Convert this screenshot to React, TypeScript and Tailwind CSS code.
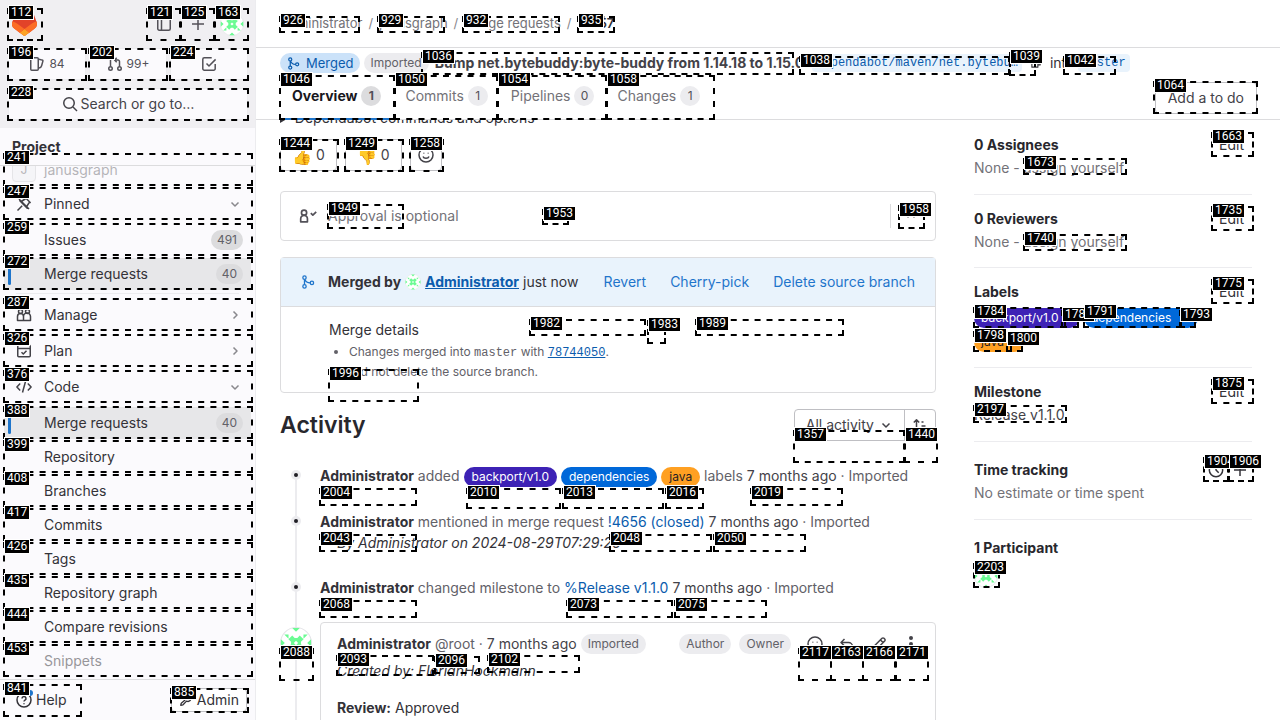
import type { ReactNode } from "react";

const icons: Record<string, ReactNode> = {
  sidebar: (<><rect x="1.75" y="1.75" width="12.5" height="12.5" rx="1.5" /><path d="M5.5 2v12" /></>),
  plus: <path d="M8 2v12M2 8h12" />,
  issues: (<><path d="M9.25 5v8.25a1 1 0 0 1-1 1h-5.5a1 1 0 0 1-1-1V2.75a1 1 0 0 1 1-1h5.5a1 1 0 0 1 1 1V5Z" /><path d="m10 3.2 3.3.9a.8.8 0 0 1 .6 1l-1.3 4.6a3 3 0 0 1-2.6 2.2" /></>),
  mr: (<><circle cx="3.5" cy="12.5" r="1.75" /><circle cx="12.5" cy="12.5" r="1.75" /><path d="M3.5 10.5V2M1.5 3.5 3.5 1.6M8 4h3a1.5 1.5 0 0 1 1.5 1.5v5M9.7 1.8 7.6 4l2.1 2.2" /></>),
  todo: (<><path d="M14.2 8v4.7a1.5 1.5 0 0 1-1.5 1.5H3.3a1.5 1.5 0 0 1-1.5-1.5V3.3a1.5 1.5 0 0 1 1.5-1.5h7.4" /><path d="m5.5 7.5 2.5 2.5 6.6-6.6" /></>),
  search: (<><circle cx="7" cy="7" r="5.25" /><path d="m11 11 4 4" /></>),
  pin: <path d="M9.5 1.8 14.2 6.5l-1.2.3-2 3.2.2 2.2-7.400-7.400 2.200.2 3.200-2ZM6.200 9.800 1.500 14.500M3 3l10 10" />,
  down: <path d="m4.500 6.500 3.500 3.500 3.500-3.500" />,
  up: <path d="m4.500 9.500 3.500-3.500 3.500 3.500" />,
  right: <path d="m6.500 4.500 3.500 3.500-3.500 3.500" />,
  users: (<><circle cx="4.500" cy="4.500" r="2" /><circle cx="11.500" cy="4.500" r="2" /><path d="M1.500 13.500V9.500a3 3 0 0 1 6 0v4ZM7.500 9.500a3.500 3.500 0 0 1 7 0v4h-7" /></>),
  plan: (<><rect x="1.750" y="2.250" width="12.500" height="11.500" rx="1" /><path d="M2 5.500h12M5.500 9.300l1.800 1.700 3.200-3.200" /></>),
  code: <path d="M4.200 4.500.9 8l3.300 3.500M11.800 4.500 15.100 8l-3.300 3.500M9.500 2.500l-3 11" />,
  help: (<><circle cx="8" cy="8" r="7" /><path d="M6 6.500a2 2 0 1 1 3 1.700c-.7.4-1 .7-1 1.400M8 11.200v1.100" /></>),
  wrench: <path d="m2 14 .6-2.400 4.300-3.600a3.600 3.600 0 0 1 4.600-5.200L9.600 5l1.400 1.400 2.500-1.800a3.600 3.600 0 0 1-4.900 4.700l-4 4.200L2 14Z" />,
  merge: (<><circle cx="4" cy="3" r="1.900" /><circle cx="4" cy="13" r="1.900" /><circle cx="12.500" cy="9" r="1.900" /><path d="M4 5v6M4.500 5c.8 2.600 3 4 6 4" /></>),
  smile: (<><circle cx="8" cy="8" r="7" /><path d="M5 9.500c.8 2.300 5.200 2.300 6 0M5.800 5.800v.8M10.200 5.800v.8" /></>),
  approve: (<><circle cx="4.500" cy="5" r="2.300" /><path d="M1.500 13.200V10.500a3 3 0 0 1 6 0v2.700ZM10.500 5.500l1.800 1.800 3-3" /></>),
  sort: <path d="M4.500 13.500V3M1.800 5.500l2.700-2.800 2.700 2.800M9.500 5h2M9.500 9h4M9.500 13h5" />,
  reply: <path d="M5.500 3 2 6.500 5.500 10M2 6.500h7.500a4 4 0 0 1 4 4V13" />,
  pencil: <path d="m2 14 .8-3.500 8.200-8.200a1.400 1.400 0 0 1 2 0l.7.7a1.400 1.400 0 0 1 0 2L5.500 13.200 2 14ZM9.500 4l2.500 2.500" />,
  dots: (<g fill="currentColor" stroke="none"><circle cx="8" cy="2" r="2" /><circle cx="8" cy="8" r="2" /><circle cx="8" cy="14" r="2" /></g>),
  clock: (<><circle cx="8" cy="8" r="6.700" /><path d="M8 4v4l2.700 2.700" /></>),
  copy: <path d="M5.500 5.500v-3h8v8h-3M2.500 5.500h8v8h-8Z" />,
};

function Icon({ name, className = "size-4" }: { name: string; className?: string }) {
  return (
    <svg viewBox="0 0 16 16" fill="none" stroke="currentColor" strokeWidth="1.5" strokeLinejoin="round" aria-hidden="true" className={`shrink-0 ${className}`}>
      {icons[name]}
    </svg>
  );
}

function Avatar({ className }: { className: string }) {
  return (
    <svg viewBox="0 0 24 24" role="img" aria-label="Administrator" className={`shrink-0 ${className}`}>
      <circle cx="12" cy="12" r="11.6" fill="#fff" stroke="#e4e4e8" strokeWidth="0.8" />
      <g fill="#6bfb93">
        <path d="M9.2 6.3 11 8.300h2l1.800-2 2.900 2.900-2 1.800v2l2 1.800-2.900 2.900-1.800-2h-2l-1.800 2-2.900-2.900 2-1.800v-2l-2-1.800ZM12 10.400 10.400 12l1.600 1.600 1.600-1.600Z" fillRule="evenodd" />
        <path d="M9.200.7h5.600L12 3.600ZM9.200 23.300h5.600L12 20.400ZM.7 9.200v5.600L3.600 12ZM23.300 9.200v5.600L20.400 12ZM3.200 5.600h3.200v3.200ZM20.800 5.600h-3.200v3.200ZM3.200 18.400h3.200v-3.200ZM20.800 18.400h-3.200v-3.200Z" />
      </g>
    </svg>
  );
}

function Tanuki() {
  return (
    <svg viewBox="0 0 25 24" className="h-6 w-[25px]" role="img" aria-label="GitLab">
      <path fill="#e24329" d="m24.507 9.500-.034-.09L21.082.562a.896.896 0 0 0-1.694.091l-2.290 7.010H7.825L5.535.653a.898.898 0 0 0-1.694-.09L.451 9.411.416 9.500a6.297 6.297 0 0 0 2.090 7.278l.012.010.030.022 5.160 3.867 2.560 1.935 1.554 1.176a1.051 1.051 0 0 0 1.268 0l1.555-1.176 2.560-1.935 5.197-3.890.014-.010A6.297 6.297 0 0 0 24.507 9.500Z" />
      <path fill="#fc6d26" d="m24.507 9.500-.034-.090a11.440 11.440 0 0 0-4.560 2.051l-7.447 5.632 4.742 3.584 5.197-3.890.014-.010A6.297 6.297 0 0 0 24.507 9.500Z" />
      <path fill="#fca326" d="m7.707 20.677 2.560 1.935 1.555 1.176a1.051 1.051 0 0 0 1.268 0l1.555-1.176 2.560-1.935-4.743-3.584-4.755 3.584Z" />
      <path fill="#fc6d26" d="M5.010 11.461a11.430 11.430 0 0 0-4.560-2.050L.416 9.500a6.297 6.297 0 0 0 2.090 7.278l.012.010.030.022 5.160 3.867 4.745-3.584-7.444-5.632Z" />
    </svg>
  );
}

function NavItem({ label, icon, count, chevron, active, className = "" }: { label: string; icon?: string; count?: string; chevron?: string; active?: boolean; className?: string }) {
  return (
    <a href="#" className={`flex h-8 shrink-0 items-center rounded pr-2 pl-1 ${active ? "bg-[#e7e7e9]" : ""} ${className}`}>
      <span className={`h-[22px] w-[3px] rounded-full ${active ? "bg-[#1f75cb]" : ""}`} />
      <span className="flex w-[33px] items-center pl-[5px] text-[#434248]">{icon && <Icon name={icon} />}</span>
      <span className="flex-1">{label}</span>
      {count && <span className="flex h-5 items-center rounded-full bg-[#dcdcde] px-1.5 text-xs text-[#626168]">{count}</span>}
      {chevron && <Icon name={chevron} className="size-4 text-[#89888d]" />}
    </a>
  );
}

function Sidebar() {
  const shortcut = "flex h-8 flex-1 items-center justify-center gap-1 rounded border border-[#ececef] bg-[#fbfafd] text-xs";
  return (
    <nav aria-label="Primary" className="flex w-64 shrink-0 flex-col border-r border-[#ececef] bg-[#fbfafd] text-[#333238]">
      <div className="flex flex-col gap-2 bg-[#f0eff2] p-2 pr-[7px] text-[#535158]">
        <div className="flex h-8 items-center gap-0.5">
          <a href="#" className="mr-auto px-1"><Tanuki /></a>
          <button aria-label="Hide sidebar" className="grid size-8 place-items-center"><Icon name="sidebar" /></button>
          <button aria-label="Create new" className="grid size-8 place-items-center"><Icon name="plus" /></button>
          <button aria-label="User menu" className="grid size-8 place-items-center"><Avatar className="size-6" /></button>
        </div>
        <div className="flex gap-[3px]">
          <a href="#" className={shortcut}><Icon name="issues" />84</a>
          <a href="#" className={shortcut}><Icon name="mr" />99+</a>
          <a href="#" aria-label="To-do list" className={shortcut}><Icon name="todo" /></a>
        </div>
        <button className="flex h-8 items-center justify-center gap-[3px] rounded border border-[#ececef] bg-[#fbfafd] text-[#434248]">
          <Icon name="search" />Search or go to…
        </button>
      </div>
      <div className="h-[38px] shrink-0 border-b border-[#dcdcde] px-3 pt-[9px] font-bold">Project</div>
      <div className="flex min-h-0 flex-1 flex-col overflow-hidden px-1">
        <a href="#" className="-mt-3 flex h-8 shrink-0 items-center gap-2 px-2 opacity-35">
          <span className="grid size-6 place-items-center rounded border border-[#bfbfc3] bg-[#ececef] text-xs">J</span>janusgraph
        </a>
        <NavItem icon="pin" label="Pinned" chevron="down" className="mt-0.5" />
        <NavItem label="Issues" count="491" className="mt-1" />
        <NavItem label="Merge requests" count="40" active className="mt-0.5" />
        <hr className="mx-3 mt-[3px] mb-[5px] border-[#ececef]" />
        <NavItem icon="users" label="Manage" chevron="right" />
        <NavItem icon="plan" label="Plan" chevron="right" className="mt-1" />
        <NavItem icon="code" label="Code" chevron="down" className="mt-1 mb-1" />
        <div className="flex flex-col gap-0.5">
          <NavItem label="Merge requests" count="40" active />
          <NavItem label="Repository" />
          <NavItem label="Branches" />
          <NavItem label="Commits" />
          <NavItem label="Tags" />
          <NavItem label="Repository graph" />
          <NavItem label="Compare revisions" />
          <NavItem label="Snippets" className="opacity-50" />
        </div>
      </div>
      <div className="flex h-[41px] shrink-0 items-center justify-between border-t border-[#dcdcde] px-2">
        <button className="relative flex h-8 items-center gap-1 pl-2"><Icon name="help" />Help
          <span className="absolute top-1.5 left-[19px] size-1.5 rounded-full bg-[#1f75cb]" />
        </button>
        <a href="#" className="flex h-6 items-center gap-1 rounded border border-[#bfbfc3] bg-white px-[7px]"><Icon name="wrench" className="size-3.5" />Admin</a>
      </div>
    </nav>
  );
}

function Tab({ label, count, active }: { label: string; count: string; active?: boolean }) {
  return (
    <a href="#" className={`flex h-11 items-center gap-1 border-b-2 pb-0.5 ${active ? "border-[#1f75cb] px-3 font-bold text-[#18171d]" : "border-transparent px-[11px] text-[#737278]"}`}>
      {label}
      <span className={`grid size-5 place-items-center rounded-full text-xs text-[#535158] ${active ? "bg-[#dcdcde]" : "bg-[#ececef] font-normal"}`}>{count}</span>
    </a>
  );
}

function Label({ children, className }: { children: ReactNode; className: string }) {
  return <a href="#" className={`inline-flex h-5 items-center rounded-full text-xs ${className}`}>{children}</a>;
}
const purple = "bg-[#3d22b5] text-white";
const blue = "bg-[#0068d9] text-white";
const orange = "bg-[#ffa022] text-[#1f1e24]";
const grayPill = "inline-flex h-5 items-center rounded-full bg-[#ececef] px-[7px] text-xs text-[#626168]";

function Crumbs() {
  const sep = <span className="px-1.5 text-[#89888d]">/</span>;
  return (
    <nav aria-label="Breadcrumb" className="flex h-12 shrink-0 items-center border-b border-[#dcdcde] px-6 text-[13px] text-[#737278]">
      <a href="#">Administrator</a>{sep}<a href="#">janusgraph</a>{sep}<a href="#">Merge requests</a>{sep}
      <a href="#" className="font-semibold text-[#333238]">!4657</a>
    </nav>
  );
}

function StickyHeader() {
  const code = "rounded bg-[#e9f3fc] px-1 font-['Liberation_Mono',monospace] text-xs leading-[18px] text-[#0b5cad]";
  return (
    <header className="h-[72px] shrink-0 border-b border-[#dcdcde] pl-6">
      <div className="flex h-7 items-center pt-0.5 whitespace-nowrap">
        <span className="mr-1 flex h-5 items-center gap-1.5 rounded-full bg-[#cbe2f9] pr-1.5 pl-[7px] text-[13px] text-[#0b5cad]"><Icon name="merge" className="size-[13px]" />Merged</span>
        <span className={`${grayPill} mr-1.5`}>Imported</span>
        <a href="#" className="mr-2 font-bold text-[#434248]">Bump net.bytebuddy:byte-buddy from 1.14.18 to 1.15.0</a>
        <a href="#" className={code}>dependabot/maven/net.bytebu…</a>
        <button aria-label="Copy branch name" className="mx-2"><Icon name="copy" className="size-3" /></button>
        into <a href="#" className={`${code} ml-1`}>master</a>
      </div>
      <div className="flex h-11 items-center justify-between pr-[23px]">
        <div className="flex gap-px">
          <Tab label="Overview" count="1" active />
          <Tab label="Commits" count="1" />
          <Tab label="Pipelines" count="0" />
          <Tab label="Changes" count="1" />
        </div>
        <button className="h-8 rounded border border-[#bfbfc3] px-3 text-[#434248]">Add a to do</button>
      </div>
    </header>
  );
}

function Note({ children, className }: { children: ReactNode; className: string }) {
  return (
    <li className={`flex ${className}`}>
      <span className="z-10 mt-1 ml-[11px] grid size-[10px] shrink-0 place-items-center rounded-full bg-[#ececef]"><span className="size-1 rounded-full bg-[#1f1e24]" /></span>
      <div className="ml-[19px] min-w-0 leading-5 text-[#626168]">{children}</div>
    </li>
  );
}

const admin = <a href="#" className="font-bold text-[#333238]">Administrator</a>;
const ago = <a href="#" className="text-[#434248]">7 months ago</a>;

function Overview() {
  const award = "flex h-8 items-center gap-1 rounded border border-[#bfbfc3] px-[11px] text-[#434248]";
  return (
    <main className="min-w-0 flex-1">
      <details className="-mt-3 h-5 text-[#333238]"><summary>Dependabot commands and options</summary></details>
      <div className="mt-[11px] flex gap-2">
        <button className={award}><span className="w-5 pt-0.5 text-base">👍</span>0</button>
        <button className={award}><span className="w-5 pt-0.5 text-base">👎</span>0</button>
        <button aria-label="Add reaction" className="grid size-8 place-items-center rounded border border-[#bfbfc3] text-[#434248]"><Icon name="smile" /></button>
      </div>
      <section className="mt-5 flex h-[50px] items-center rounded border border-[#dcdcde] pr-2.5 pl-[18px] text-[#737278]">
        <Icon name="approve" className="size-[18px] text-[#535158]" />
        <span className="ml-[11px] flex-1">Approval is optional</span>
        <button aria-label="Expand" className="flex h-6 items-center border-l border-[#dcdcde] pr-1.5 pl-3"><Icon name="up" /></button>
      </section>
      <section className="mt-4 rounded border border-[#dcdcde]">
        <div className="flex h-[49px] items-center border-b border-[#dcdcde] bg-[#e9f3fc] pr-5 pl-5 whitespace-nowrap text-[#1f75cb]">
          <Icon name="merge" className="size-[14px]" />
          <span className="ml-[13px] flex flex-1 items-center gap-1 text-[#333238]"><b className="font-bold">Merged by</b><Avatar className="size-4" />
            <a href="#" className="font-bold text-[#0b5cad] underline">Administrator</a>just now</span>
          <button className="mr-6">Revert</button><button className="mr-6">Cherry-pick</button><button>Delete source branch</button>
        </div>
        <div className="h-[85px] pt-[11px] pl-12">
          <h3 className="leading-6 text-[#333238]">Merge details</h3>
          <ul className="list-disc pl-5 text-xs leading-5 text-[#626168]">
            <li>Changes merged into <code className="font-['Liberation_Mono',monospace] leading-4">master</code> with <a href="#" className="font-['Liberation_Mono',monospace] leading-4 text-[#0b5cad] underline">78744050</a>.</li>
            <li>Did not delete the source branch.</li>
          </ul>
        </div>
      </section>
      <div className="mt-4 flex h-8 items-center justify-between">
        <h2 className="text-[23px] font-semibold text-[#28272d]">Activity</h2>
        <div className="flex h-8 rounded border border-[#bfbfc3] text-[#434248]">
          <button className="flex items-center gap-1 pr-2.5 pl-[11px]">All activity<Icon name="down" /></button>
          <button aria-label="Sort direction" className="grid w-[31px] place-items-center border-l border-[#bfbfc3]"><Icon name="sort" /></button>
        </div>
      </div>
      <div className="relative mt-[25px]">
        <span className="absolute inset-y-2.5 left-[15px] w-0.5 bg-[#ececef]" />
        <ul>
          <Note className="h-[46px]">{admin} added <Label className={`${purple} px-2`}>backport/v1.0</Label> <Label className={`${blue} px-2`}>dependencies</Label> <Label className={`${orange} px-2`}>java</Label> labels {ago} · Imported</Note>
          <Note className="h-[66px]">{admin} mentioned in merge request <a href="#" className="text-[#0b5cad]">!4656 (closed)</a> {ago} · Imported
            <p className="mt-px pl-[17px] text-[#333238] italic">By Administrator on 2024-08-29T07:29:26</p></Note>
          <Note className="h-11">{admin} changed milestone to <a href="#" className="text-[#0b5cad]">%Release v1.1.0</a> {ago} · Imported</Note>
        </ul>
        <article className="relative flex gap-2">
          <Avatar className="mt-[5px] size-8" />
          <div className="h-36 flex-1 rounded border border-[#dcdcde] bg-white pt-[11px] pr-2 pl-4 text-[#333238]">
            <div className="flex h-5 items-center whitespace-nowrap text-[#626168]">
              {admin}<span className="mr-1 ml-1">@root ·</span>{ago}<span className={`${grayPill} mr-auto ml-1`}>Imported</span>
              <span className={grayPill}>Author</span><span className={`${grayPill} mr-2 ml-2`}>Owner</span>
              {["smile", "reply", "pencil", "dots"].map((n) => (
                <button key={n} aria-label={n} className="grid w-8 place-items-center text-[#434248]"><Icon name={n} /></button>
              ))}
            </div>
            <p className="mt-[7px] leading-5 italic">Created by: FlorianHockmann</p>
            <p className="mt-[17px] leading-5"><b className="font-bold">Review:</b> Approved</p>
          </div>
        </article>
      </div>
    </main>
  );
}

function Side({ title, action, children, className }: { title: string; action?: ReactNode; children: ReactNode; className: string }) {
  return (
    <section className={`border-[#ececef] ${className}`}>
      <div className="flex h-6 items-center"><h3 className="flex-1 font-bold text-[#28272d]">{title}</h3>{action}</div>
      {children}
    </section>
  );
}

function Details() {
  const edit = <button className="px-2 text-[#333238]">Edit</button>;
  const none = <p className="mt-px leading-5 text-[#737278]">None - <button>assign yourself</button></p>;
  return (
    <aside className="w-[278px] shrink-0">
      <Side title="0 Assignees" action={edit} className="border-b pt-[13px] pb-4">{none}</Side>
      <Side title="0 Reviewers" action={edit} className="border-b pt-3 pb-[15px]">{none}</Side>
      <Side title="Labels" action={edit} className="border-b pt-3 pb-[15px]">
        <div className="mt-1 flex max-w-[260px] flex-wrap gap-1">
          <Label className={`${purple} w-[106px] pl-[7px]`}>backport/v1.0</Label>
          <Label className={`${blue} w-[114px] pl-[7px]`}>dependencies</Label>
          <Label className={`${orange} w-[50px] pl-[7px]`}>java</Label>
        </div>
      </Side>
      <Side title="Milestone" action={edit} className="border-b pt-3 pb-4"><a href="#" className="mt-px block leading-5 text-[#434248]">Release v1.1.0</a></Side>
      <Side title="Time tracking" className="border-b pt-4 pb-4" action={
        <div className="flex text-[#333238]">
          <button aria-label="Time report" className="grid size-6 place-items-center"><Icon name="clock" /></button>
          <button aria-label="Add time entry" className="grid size-6 place-items-center"><Icon name="plus" /></button>
        </div>}>
        <p className="mt-px leading-5 text-[#737278]">No estimate or time spent</p>
      </Side>
      <Side title="1 Participant" className="pt-4"><a href="#" className="mt-1 block"><Avatar className="size-6" /></a></Side>
    </aside>
  );
}

/* id, left, top, width, height */
const marks: [number, number, number, number, number][] = [
  [112, 7, 8, 36, 33], [121, 146, 8, 35, 33], [125, 180, 8, 35, 33], [163, 214, 8, 35, 33],
  [196, 7, 48, 80, 33], [202, 88, 48, 80, 33], [224, 169, 48, 80, 33], [228, 7, 88, 242, 33],
  [241, 3, 153, 250, 33], [247, 3, 187, 250, 33], [259, 3, 223, 250, 33], [272, 3, 257, 250, 33],
  [287, 3, 298, 250, 33], [326, 3, 334, 250, 33], [376, 3, 370, 250, 33], [388, 3, 406, 250, 33],
  [399, 3, 440, 250, 33], [408, 3, 474, 250, 33], [417, 3, 508, 250, 33], [426, 3, 542, 250, 33],
  [435, 3, 576, 250, 33], [444, 3, 610, 250, 33], [453, 3, 644, 250, 33], [841, 3, 684, 79, 33],
  [885, 170, 688, 79, 25], [926, 279, 16, 81, 17], [929, 377, 16, 68, 17], [932, 462, 16, 98, 17],
  [935, 577, 16, 38, 17], [1036, 421, 52, 373, 23], [1038, 799, 56, 211, 19], [1039, 1009, 52, 27, 24],
  [1042, 1063, 56, 53, 19], [1046, 279, 75, 116, 45], [1050, 394, 75, 104, 45], [1054, 497, 75, 110, 45],
  [1058, 606, 75, 109, 45], [1064, 1153, 81, 105, 33], [1244, 279, 139, 60, 33], [1249, 344, 139, 60, 33],
  [1258, 409, 139, 35, 33], [1357, 793, 430, 112, 33], [1440, 904, 430, 34, 33], [1663, 1211, 132, 43, 25],
  [1673, 1023, 158, 104, 17], [1735, 1211, 206, 43, 25], [1740, 1023, 234, 104, 17], [1775, 1211, 279, 43, 25],
  [1784, 973, 307, 93, 21], [1786, 1061, 310, 18, 18], [1791, 1083, 307, 99, 21], [1793, 1179, 310, 17, 18],
  [1798, 973, 331, 39, 21], [1800, 1006, 334, 17, 18], [1875, 1211, 379, 43, 25], [1904, 1203, 457, 26, 25],
  [1906, 1228, 457, 26, 25], [1949, 327, 204, 77, 25], [1953, 542, 209, 27, 16], [1958, 898, 205, 27, 24],
  [1982, 529, 319, 117, 17], [1983, 647, 320, 19, 24], [1989, 695, 319, 149, 17], [1996, 328, 369, 91, 33],
  [2004, 319, 488, 98, 18], [2010, 466, 488, 95, 21], [2013, 562, 488, 102, 21], [2016, 665, 488, 39, 21],
  [2019, 750, 488, 93, 18], [2043, 319, 534, 98, 18], [2048, 609, 534, 103, 18], [2050, 713, 534, 93, 18],
  [2068, 319, 600, 98, 18], [2073, 566, 600, 107, 18], [2075, 674, 600, 93, 18], [2088, 279, 648, 35, 33],
  [2093, 336, 655, 98, 21], [2096, 434, 656, 46, 18], [2102, 487, 655, 93, 18], [2117, 798, 648, 34, 33],
  [2163, 830, 648, 34, 33], [2166, 862, 648, 34, 33], [2171, 895, 648, 34, 33], [2197, 973, 405, 94, 18],
  [2203, 973, 563, 27, 25],
];

/* Every side begins and ends on a full dash. */
function dashes(length: number) {
  const n = Math.max(2, Math.round((length + 6) / 12));
  return `6 ${(length - n * 6) / (n - 1)}`;
}

function Marks() {
  return (
    <div className="pointer-events-none absolute inset-0 z-20 overflow-hidden">
      <svg className="size-full" stroke="#000" strokeWidth="2" aria-hidden="true">
        {marks.map(([id, x, y, w, h]) => (
          <g key={id}>
            <path d={`M${x} ${y + 1}h${w}M${x} ${y + h - 1}h${w}`} strokeDasharray={dashes(w)} />
            <path d={`M${x + 1} ${y}v${h}M${x + w - 1} ${y}v${h}`} strokeDasharray={dashes(h)} />
          </g>
        ))}
      </svg>
      {marks.map(([id, left, top]) => (
        <span key={id} className="absolute border border-white bg-black px-0.5 font-['Roboto',sans-serif] text-xs leading-[13px] text-white" style={{ left: left + 1, top: top - 3 }}>{id}</span>
      ))}
    </div>
  );
}

export default function App() {
  return (
    <div className="relative flex h-screen overflow-hidden bg-white font-['Inter',sans-serif] text-sm text-[#333238]">
      <Sidebar />
      <div className="flex min-w-0 flex-1 flex-col">
        <Crumbs />
        <StickyHeader />
        <div className="flex min-h-0 flex-1 gap-[38px] overflow-hidden pr-7 pl-6">
          <Overview />
          <Details />
        </div>
      </div>
      <Marks />
    </div>
  );
}
